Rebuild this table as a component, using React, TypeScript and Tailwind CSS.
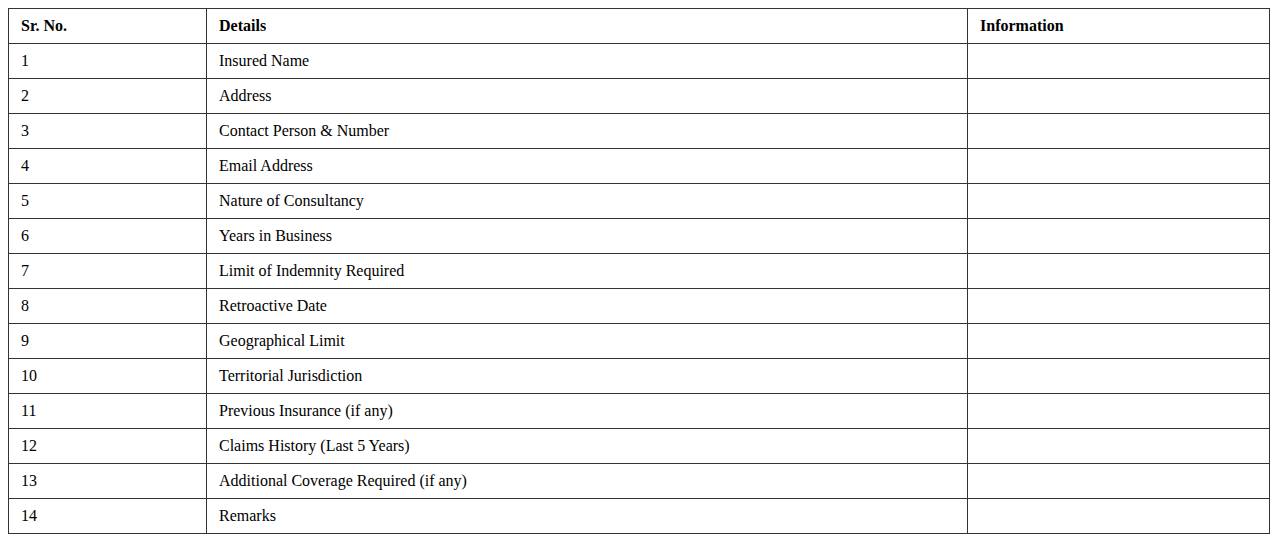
const rows = [
  "Insured Name",
  "Address",
  "Contact Person & Number",
  "Email Address",
  "Nature of Consultancy",
  "Years in Business",
  "Limit of Indemnity Required",
  "Retroactive Date",
  "Geographical Limit",
  "Territorial Jurisdiction",
  "Previous Insurance (if any)",
  "Claims History (Last 5 Years)",
  "Additional Coverage Required (if any)",
  "Remarks",
];

const cell = "border border-[#333] px-3 h-[35px] text-left align-middle";

export default function App() {
  return (
    <div className="bg-white p-2 text-[16px] leading-[18px] text-black [font-family:'Liberation_Serif',serif]">
      <table className="w-[1261px] border-collapse table-fixed">
        <colgroup>
          <col className="w-[198px]" />
          <col className="w-[761px]" />
          <col className="w-[302px]" />
        </colgroup>
        <thead>
          <tr>
            <th className={`${cell} font-bold`}>Sr. No.</th>
            <th className={`${cell} font-bold`}>Details</th>
            <th className={`${cell} font-bold`}>Information</th>
          </tr>
        </thead>
        <tbody>
          {rows.map((r, i) => (
            <tr key={r}>
              <td className={cell}>{i + 1}</td>
              <td className={cell}>{r}</td>
              <td className={cell}></td>
            </tr>
          ))}
        </tbody>
      </table>
    </div>
  );
}
